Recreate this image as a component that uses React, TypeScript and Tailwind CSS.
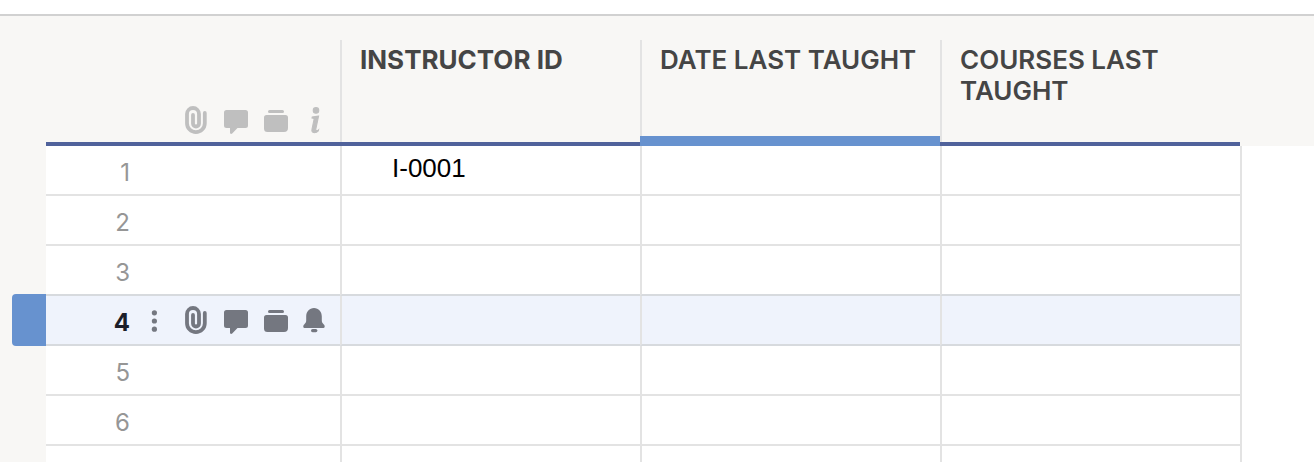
import { useState } from "react";
import clsx from "clsx";
import { BsInfo } from "react-icons/bs";

interface coluna {
  nome: string,
  primaria: boolean
}

interface linha {
  id: number,
  valores: string[]
}

const colunas: coluna[] = [
  { nome: "INSTRUCTOR ID", primaria: true },
  { nome: "DATE LAST TAUGHT", primaria: false },
  { nome: "COURSES LAST TAUGHT", primaria: false },
];

const linhas: linha[] = [
  { id: 1, valores: ["I-0001", "", ""] },
  { id: 2, valores: ["", "", ""] },
  { id: 3, valores: ["", "", ""] },
  { id: 4, valores: ["", "", ""] },
  { id: 5, valores: ["", "", ""] },
  { id: 6, valores: ["", "", ""] },
];

function Clip() {
  return (
    <svg width="24" height="28" viewBox="0 0 24 28" fill="none" stroke="currentColor" strokeWidth="3.8" strokeLinecap="round">
      <path d="M20.8 7V17.2A8.9 8.9 0 0 1 3 17.2V8A6 6 0 0 1 15 8V17.5A3 3 0 0 1 9 17.5V9" />
    </svg>
  )
}

function Comment() {
  return (
    <svg width="24" height="28" viewBox="0 0 24 28" fill="currentColor">
      <path d="M2.5 4H21.5A2.5 2.5 0 0 1 24 6.5V19.5A2.5 2.5 0 0 1 21.5 22H13.5L8.2 27.5C7.4 28.4 6 28 6 26.8V22H2.5A2.5 2.5 0 0 1 0 19.5V6.5A2.5 2.5 0 0 1 2.5 4Z" />
    </svg>
  )
}

function Proof() {
  return (
    <svg width="24" height="28" viewBox="0 0 24 28" fill="currentColor">
      <rect x="4" y="4" width="16" height="3" rx="1.5" />
      <path d="M2.5 9H21.5A2.5 2.5 0 0 1 24 11.5V22A4 4 0 0 1 20 26H3.5A3.5 3.5 0 0 1 0 22.5V11.5A2.5 2.5 0 0 1 2.5 9Z" />
    </svg>
  )
}

function Bell() {
  return (
    <svg width="24" height="28" viewBox="0 0 24 28" fill="currentColor">
      <path d="M12 2C16.6 2 19.8 5.6 19.8 10.5V14.5C19.8 16.2 20.6 17.2 21.8 18.4C23.4 20 22.8 22 21 22H3C1.2 22 .6 20 2.2 18.4C3.4 17.2 4.2 16.2 4.2 14.5V10.5C4.2 5.6 7.4 2 12 2Z" />
      <rect x="9" y="23" width="6.4" height="3.2" rx="1.6" />
    </svg>
  )
}

function Dots() {
  return (
    <svg width="6" height="22" viewBox="0 0 6 22" fill="currentColor">
      <circle cx="3.4" cy="2.8" r="2.6" />
      <circle cx="3.4" cy="11" r="2.6" />
      <circle cx="3.4" cy="19.2" r="2.6" />
    </svg>
  )
}

export default function App() {
  const [useLinha, setLinha] = useState(4);
  const [useColuna, setColuna] = useState(1);

  return (
    <main className="h-screen overflow-hidden bg-white pt-3.5 font-['Inter',sans-serif]">
      <table className="w-full table-fixed border-separate border-spacing-0 border-t-2 border-[#d1d1d1]">
        <colgroup>
          <col className="w-[46px]" />
          <col className="w-[294px]" />
          <col className="w-[300px]" />
          <col className="w-[300px]" />
          <col className="w-[300px]" />
          <col />
        </colgroup>
        <thead className="bg-[#f8f7f5]">
          <tr>
            <td className="p-0"></td>
            <td className="p-0">
              <div className="flex h-[130px] items-end border-b-4 border-[#50629b] pb-2 pl-[130px] text-[#bfbfbf]">
                <span className="flex w-10 justify-center"><Clip /></span>
                <span className="flex w-10 justify-center"><Comment /></span>
                <span className="flex w-10 justify-center"><Proof /></span>
                <span className="flex h-7 w-10 items-center justify-center"><BsInfo className="size-11 shrink-0 stroke-[0.4]" /></span>
              </div>
            </td>
            {colunas.map((c: coluna, i: number) =>
              <th key={c.nome} scope="col" className="p-0 text-left align-top" onClick={() => setColuna(i)}>
                <div className={clsx("flex h-[130px] flex-col pt-6", useColuna === i ? "border-b-[10px] border-[#6792cf]" : "border-b-4 border-[#50629b]")}>
                  <div className={clsx("flex-1 border-l-2 border-[#e3e3e3] pt-1 pl-[18px] text-[26px] leading-[31px] text-[#454545]", c.primaria ? "font-bold" : "font-semibold")}>
                    {c.nome}
                  </div>
                </div>
              </th>
            )}
            <td className="p-0"></td>
          </tr>
        </thead>
        <tbody>
          {linhas.map((l: linha) => {
            const ativa = l.id === useLinha;
            // the row above the active one shares its darker line
            const borda = ativa || l.id === useLinha - 1 ? "border-b-[#d7dade]" : "border-b-[#e3e3e3]";
            return (
              <tr key={l.id} className="h-[50px]" onClick={() => setLinha(l.id)}>
                <td className="relative bg-[#f8f7f5] p-0">
                  {ativa && <span className="absolute -top-0.5 right-0 bottom-0 left-3 rounded-l bg-[#6792cf]"></span>}
                </td>
                <th scope="row" className={clsx("border-b-2 p-0", borda, ativa ? "bg-[#eff3fc]" : "bg-white")}>
                  <div className="flex h-12 items-center text-[#747780]">
                    <span className={clsx("w-[86px] pt-1.5 pr-0.5 text-right text-2xl", ativa ? "font-bold text-[#1c1e29]" : "font-normal text-[#969696]")}>{l.id}</span>
                    {ativa && <>
                      <button aria-label="Row menu" className="flex w-11 justify-center pt-0.5"><Dots /></button>
                      <button aria-label="Attachments" className="flex w-10 justify-center"><Clip /></button>
                      <button aria-label="Comments" className="flex w-10 justify-center"><Comment /></button>
                      <button aria-label="Proofs" className="flex w-10 justify-center"><Proof /></button>
                      <button aria-label="Reminders" className="flex w-9 justify-center"><Bell /></button>
                    </>}
                  </div>
                </th>
                {l.valores.map((v: string, i: number) =>
                  <td key={i} className={clsx("border-b-2 border-l-2 border-l-[#e3e3e3] p-0 pb-1 pl-[50px] font-['Liberation_Sans',sans-serif] text-[26px] leading-8 text-black", borda, ativa ? "bg-[#eff3fc]" : "bg-white")}>
                    {v}
                  </td>
                )}
                <td className="border-l-2 border-[#e3e3e3] bg-white p-0"></td>
              </tr>
            )
          })}
          {/* blank row under the last record */}
          <tr className="h-[50px]">
            <td className="bg-[#f8f7f5] p-0"></td>
            <td className="p-0"></td>
            {colunas.map((c: coluna) => <td key={c.nome} className="border-l-2 border-[#e3e3e3] p-0"></td>)}
            <td className="border-l-2 border-[#e3e3e3] p-0"></td>
          </tr>
        </tbody>
      </table>
    </main>
  )
};
